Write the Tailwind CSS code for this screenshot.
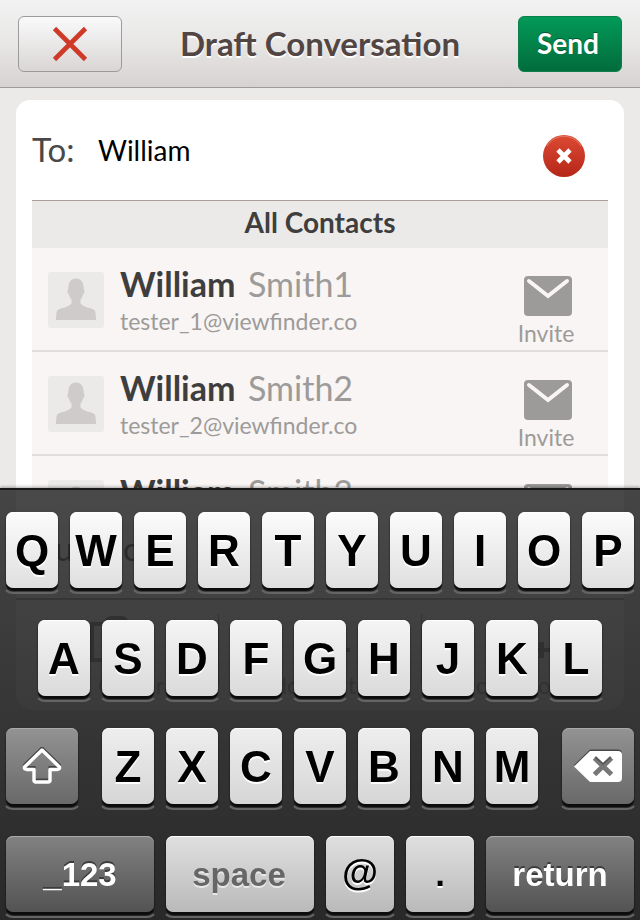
<!DOCTYPE html>
<html lang="en">
<head>
<meta charset="utf-8">
<title>Draft Conversation</title>
<script src="https://cdn.jsdelivr.net/npm/@tailwindcss/browser@4"></script>
</head>
<body class="w-[640px] h-[920px] overflow-hidden bg-[#ebeae8] font-['Lato',sans-serif] flex flex-col whitespace-nowrap">
<header class="h-[88px] shrink-0 border-b border-[#9d9b99] bg-linear-to-b from-[#f2f2f2] via-[#e8e7e6] to-[#d6d2d1] flex items-start justify-between px-[18px] pt-4">
  <button class="w-[104px] h-14 rounded-md border border-[#9d9b99] bg-linear-to-b from-[#fafafa] to-[#d9d6d5] flex items-center justify-center">
    <svg class="w-[36px] h-[36px]" viewBox="0 0 36 36"><path d="M2.5 2.5 33.500 33.500M33.500 2.500 2.500 33.500" stroke="#cf3a28" stroke-width="4.600"/></svg>
  </button>
  <h1 class="text-[33px] leading-[54px] font-bold text-[#524644] [text-shadow:0_2px_0_#fff]">Draft Conversation</h1>
  <button class="w-[104px] h-14 rounded-md border border-[#0b8049] bg-linear-to-b from-[#029a58] to-[#026c3c] text-white font-bold text-[28px] leading-[52px] text-center pb-[3px] pr-1 [text-shadow:0_-1px_0_#00562f]">Send</button>
</header>
<main class="mx-4 mt-3 h-[700px] bg-white rounded-t-[14px] px-4">
  <div class="h-[100px] flex relative">
    <label class="text-[33px] leading-[98px] text-[#4a4848] w-[66px]">To:</label>
    <div class="text-[28px] leading-[100px] text-black">William</div>
    <svg class="absolute left-[510px] top-[34px] w-[44px] h-[44px]" viewBox="0 0 44 44"><defs><linearGradient id="r" x2="0" y2="1"><stop stop-color="#dc4a33"/><stop offset="1" stop-color="#b52619"/></linearGradient></defs><circle cx="22" cy="22" r="21" fill="url(#r)"/><path d="M5 12A19.800 19.800 0 0 1 39 12" fill="none" stroke="#e57b67" stroke-width="1"/><path d="M16 16 28 28M28 16 16 28" stroke="#fff" stroke-width="4.600"/></svg>
  </div>
  <div class="h-12 bg-[#ebeae8] border-t border-[#ab9f9b] text-center text-[28px] leading-[43px] font-bold text-[#3f3e3e]">All Contacts</div>
  <div id="contacts"></div>
</main>
<section class="fixed left-0 top-[488px] w-[640px] h-[432px] border-t-2 border-[#17181a] bg-linear-to-b from-[#454545] to-[#292929] shadow-[0_-1px_3px_#0005] font-['Liberation_Sans',sans-serif]">
  <!-- toolbar dimly visible through the translucent keyboard -->
  <div class="absolute left-4 top-0 w-[608px] h-[220px] rounded-b-2xl bg-white/[0.025] font-['Lato',sans-serif] text-[#2b2b2b]">
    <div class="absolute inset-x-0 top-[108px] h-[2px] bg-[#353535]"></div>
    <div class="absolute left-[202px] top-[124px] h-[70px] w-px bg-[#333]"></div>
    <div class="absolute left-[405px] top-[124px] h-[70px] w-px bg-[#333]"></div>
    <span class="absolute left-[39px] top-[34px] text-[33px]">u</span>
    <span class="absolute left-[107px] top-[34px] text-[33px]">o</span>
    <div class="absolute left-[74px] top-[132px] w-[60px] h-[40px] border-[4px] border-[#303030]"></div>
    <div class="absolute left-[88px] top-[126px] w-[25px] h-[8px] rounded-t-lg bg-[#303030]"></div>
    <div class="absolute left-[317px] top-[158px] w-[17px] h-[4px] bg-[#303030]"></div>
    <div class="absolute left-[518px] top-[158px] w-[16px] h-[4px] bg-[#303030]"></div>
    <div class="absolute left-[523px] top-[152px] w-[5px] h-[16px] bg-[#303030]"></div>
    <span class="absolute left-[82px] top-[178px] text-[23px] text-[#313131]">Camera</span>
    <span class="absolute left-[258px] top-[178px] text-[23px] text-[#313131]">do</span>
    <span class="absolute left-[332px] top-[178px] text-[23px] text-[#313131]">to</span>
    <span class="absolute left-[460px] top-[178px] text-[23px] text-[#313131]">o</span>
    <span class="absolute left-[522px] top-[178px] text-[23px] text-[#313131]">o</span>
  </div>
  <div id="keys" class="relative pt-[22px] flex flex-col gap-8"></div>
</section>
<script>
const contact = n => `<div class="h-[104px] bg-[#f8f5f4] border-b-2 border-[#e0dedd] flex pl-4">
  <svg class="w-14 h-14 mt-6 shrink-0" viewBox="0 0 56 56"><rect width="56" height="56" rx="3" fill="#ebeae9"/><path d="M28 6.500C22.500 6.500 20 11 20.300 18C18.800 18 19.500 22 21 22.500C21.500 25 22.500 26.500 23.500 27.500V31.500C20 36 11 35.500 9 39C8.300 41 8 45 8 48H48C48 45 47.700 41 47 39C45 35.500 36 36 32.500 31.500V27.500C33.500 26.500 34.500 25 35 22.500C36.500 22 37.200 18 35.700 18C36 11 33.500 6.500 28 6.500Z" fill="#cecbca"/></svg>
  <div class="ml-4 w-[350px] pt-[16px]">
    <div class="text-[34px] leading-[40px] text-[#9d9b99] flex"><b class="text-[#3f3e3e] w-[128px]">William</b><span>Smith${n}</span></div>
    <div class="text-[23px] leading-[34px] text-[#9d9b99]">tester_${n}@viewfinder.co</div>
  </div>
  <div class="w-[120px] flex flex-col items-center pt-7 ml-[18px]">
    <svg class="w-12 h-10 shrink-0" viewBox="0 0 48 40"><rect width="48" height="40" rx="4" fill="#9d9b99"/><path d="M5 5 24 20 43 5" fill="none" stroke="#f8f5f4" stroke-width="4" stroke-linecap="round"/></svg>
    <div class="text-[23px] leading-[34px] text-[#9d9b99] pr-[4px]">Invite</div>
  </div>
</div>`;
document.getElementById('contacts').innerHTML = [1, 2, 3].map(contact).join('');

const ring = '<i class="absolute -inset-x-[4px] -bottom-[6px] h-[20px] rounded-b-[11px] border-x-2 border-b-2 border-x-transparent border-b-[#656565]"></i>';
const light = ['bg-linear-to-b from-[#fcfcfc] to-[#dfdfdf]', 'bg-linear-to-b from-[#f5f5f5] to-[#dadada]', 'bg-linear-to-b from-[#eeeeee] to-[#d6d6d6]', 'bg-linear-to-b from-[#e0e0e0] to-[#bababa]'];
const face = 'relative h-[76px] rounded-[7px] flex items-center justify-center font-bold ';
const lightShade = ' shadow-[0_3px_1px_#0c0c0c,0_1px_2px_#0008,inset_0_1px_0_#fff] [text-shadow:0_2px_0_#fff]';
const darkShade = ' text-white shadow-[0_3px_1px_#0c0c0c,0_1px_2px_#0008,inset_0_1px_0_#aaa] [text-shadow:0_-2px_0_#3c3c3c]';
const key = (w, cls, c) => `<div class="relative shrink-0" style="width:${w}px">${ring}<div class="${face}${cls}">${c}</div></div>`;
const letters = (s, r) => [...s].map(c => key(52, light[r] + lightShade + ' text-[44px] text-black pt-[2px]', c)).join('');
const d1 = 'bg-linear-to-b from-[#939393] to-[#696969]' + darkShade;
const d2 = 'bg-linear-to-b from-[#828282] to-[#535353] text-[33px] pt-[2px]' + darkShade;
const arrow = 'M21 3 38.500 20Q39 22.500 36 22.500H29V33Q29 35 27 35H15Q13 35 13 33V22.500H6Q3 22.500 3.500 20Z';
const shift = `<svg class="w-[42px] h-[38px]" viewBox="0 0 42 38"><path transform="translate(0 -2)" d="${arrow}" fill="none" stroke="#444" stroke-width="3"/><path d="${arrow}" fill="none" stroke="#fff" stroke-width="3.500" stroke-linejoin="round"/></svg>`;
const del = `<svg class="w-[48px] h-[34px] -mt-px" viewBox="0 0 48 34"><path transform="translate(0 -1.500)" d="M16 2H44Q48 2 48 6V29Q48 33 44 33H16L0 17.500Z" fill="#484848"/><path d="M16 2H44Q48 2 48 6V29Q48 33 44 33H16L0 17.500Z" fill="#fff"/><path d="M20.500 9 37.500 25.500M37.500 9 20.500 25.500" stroke="#777" stroke-width="5"/><path d="M21 8 29 15 37 8" fill="none" stroke="#555" stroke-width="1.500"/></svg>`;
const row = c => `<div class="flex justify-center gap-3">${c}</div>`;
document.getElementById('keys').innerHTML =
  row(letters('QWERTYUIOP', 0)) + row(letters('ASDFGHJKL', 1)) +
  `<div class="flex justify-between px-1.5">${key(72, d1, shift)}<div class="flex gap-3">${letters('ZXCVBNM', 2)}</div>${key(72, d1, del)}</div>` +
  row(key(148, d2, '_123') +
    key(148, light[3] + ' text-[33px] text-[#666] pt-[2px] pr-[2px] shadow-[0_3px_1px_#0c0c0c,0_1px_2px_#0008,inset_0_1px_0_#fff] [text-shadow:0_2px_0_#e8e8e8]', 'space') +
    key(68, light[3] + lightShade + ' text-[37px] text-black pb-[2px]', '@') +
    key(68, light[3] + lightShade + ' text-[35px] text-black', '.') +
    key(148, d2, 'return'));
</script>
</body>
</html>
